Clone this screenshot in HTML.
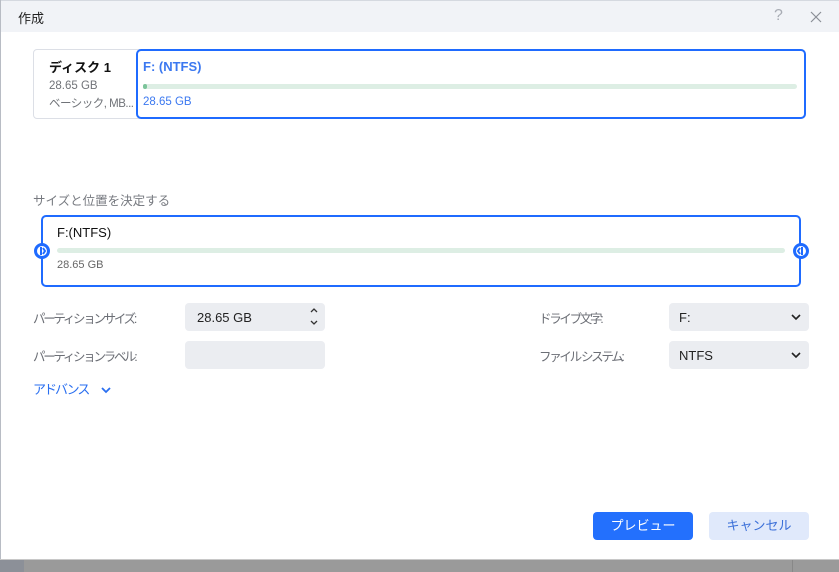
<!DOCTYPE html>
<html><head><meta charset="utf-8"><style>
*{margin:0;padding:0;box-sizing:border-box}
body{width:839px;height:572px;position:relative;overflow:hidden;background:#fff;font-family:"Liberation Sans","Noto Sans CJK JP",sans-serif;}
.a{position:absolute}
.lbl{font-size:12.5px;color:#6b6e75;letter-spacing:-2.3px}
.inp{background:#ebedf1;border-radius:4px;height:28px;width:140px;font-size:13px;color:#222;padding-left:12px;line-height:30px}
</style></head><body>
<div class="a" style="left:0;top:0;width:839px;height:32px;background:#f1f3f7;border-top:1px solid #d5d9e0"></div>
<div class="a" style="left:0;top:0;width:1px;height:559px;background:#b8bcc4"></div>
<div class="a" style="left:18px;top:8px;font-size:13px;color:#222">作成</div>
<div class="a" style="left:774px;top:7px;font-size:16px;color:#a8acb4">?</div>
<svg class="a" style="left:810px;top:11px" width="12" height="12"><path d="M1 1L11 11M11 1L1 11" stroke="#8a8e96" stroke-width="1.2"/></svg>

<div class="a" style="left:33px;top:49px;width:772px;height:70px;border:1px solid #dcdfe6;border-radius:4px"></div>
<div class="a" style="left:49px;top:57px;font-size:13px;font-weight:bold;color:#111">ディスク 1</div>
<div class="a" style="left:49px;top:80px;font-size:11.5px;color:#707378">28.65 GB</div>
<div class="a" style="left:49px;top:95px;font-size:11.5px;color:#707378;letter-spacing:-0.5px">ベーシック, MB...</div>
<div class="a" style="left:136px;top:49px;width:670px;height:70px;border:2px solid #1f6bff;border-radius:5px;background:#fff"></div>
<div class="a" style="left:143px;top:59px;font-size:13px;font-weight:bold;color:#3b78f0">F: (NTFS)</div>
<div class="a" style="left:143px;top:84px;width:654px;height:5px;background:#ddeee4;border-radius:3px"></div>
<div class="a" style="left:143px;top:84px;width:4px;height:5px;background:#7cc49a;border-radius:2px"></div>
<div class="a" style="left:143px;top:96px;font-size:11.5px;color:#3b78f0">28.65 GB</div>

<div class="a" style="left:33px;top:190px;font-size:12.5px;color:#777a80">サイズと位置を決定する</div>
<div class="a" style="left:41px;top:215px;width:760px;height:72px;border:2px solid #1f6bff;border-radius:5px"></div>
<div class="a" style="left:57px;top:225px;font-size:13px;color:#111">F:(NTFS)</div>
<div class="a" style="left:57px;top:248px;width:728px;height:5px;background:#ddeee4;border-radius:3px"></div>
<div class="a" style="left:57px;top:259px;font-size:11px;color:#666">28.65 GB</div>
<svg class="a" style="left:34px;top:243px" width="16" height="16"><circle cx="8" cy="8" r="6.5" fill="#fff" stroke="#1f6bff" stroke-width="3"/><path d="M7 4v8M9 5l2 3-2 3" stroke="#1f6bff" stroke-width="2" fill="none"/></svg>
<svg class="a" style="left:793px;top:243px" width="16" height="16"><circle cx="8" cy="8" r="6.5" fill="#fff" stroke="#1f6bff" stroke-width="3"/><path d="M9 4v8M7 5l-2 3 2 3" stroke="#1f6bff" stroke-width="2" fill="none"/></svg>

<div class="a lbl" style="left:33px;top:308px">パーティションサイズ:</div>
<div class="a inp" style="left:185px;top:303px">28.65 GB</div>
<svg class="a" style="left:309px;top:306px" width="10" height="22"><path d="M2 6l3-3 3 3M2 15l3 3 3-3" stroke="#333" stroke-width="1.3" fill="none"/></svg>
<div class="a lbl" style="left:33px;top:346px">パーティションラベル:</div>
<div class="a inp" style="left:185px;top:341px"></div>
<div class="a" style="left:33px;top:379px;font-size:13px;color:#2a6ff0;letter-spacing:-2px">アドバンス</div>
<svg class="a" style="left:100px;top:386px" width="12" height="8"><path d="M2 2l4 4 4-4" stroke="#2a6ff0" stroke-width="1.8" fill="none"/></svg>

<div class="a lbl" style="left:539px;top:308px">ドライブ文字:</div>
<div class="a inp" style="left:669px;top:303px;padding-left:10px">F:</div>
<svg class="a" style="left:791px;top:313px" width="10" height="8"><path d="M1 2l4 4 4-4" stroke="#222" stroke-width="1.6" fill="none"/></svg>
<div class="a lbl" style="left:539px;top:346px">ファイル システム:</div>
<div class="a inp" style="left:669px;top:341px;padding-left:10px">NTFS</div>
<svg class="a" style="left:791px;top:351px" width="10" height="8"><path d="M1 2l4 4 4-4" stroke="#222" stroke-width="1.6" fill="none"/></svg>

<div class="a" style="left:593px;top:512px;width:100px;height:28px;background:#2370fd;border-radius:4px;color:#fff;font-size:13px;text-align:center;line-height:28px">プレビュー</div>
<div class="a" style="left:709px;top:512px;width:100px;height:28px;background:#e0e9fb;border-radius:4px;color:#3a6fd8;font-size:13px;text-align:center;line-height:28px">キャンセル</div>

<div class="a" style="left:0;top:559px;width:839px;height:13px;background:#9a9a9a;border-top:1px solid #c8c8c8"></div>
<div class="a" style="left:0;top:560px;width:24px;height:12px;background:#8c9098"></div>
<div class="a" style="left:792px;top:560px;width:1px;height:12px;background:#888"></div>
</body></html>
